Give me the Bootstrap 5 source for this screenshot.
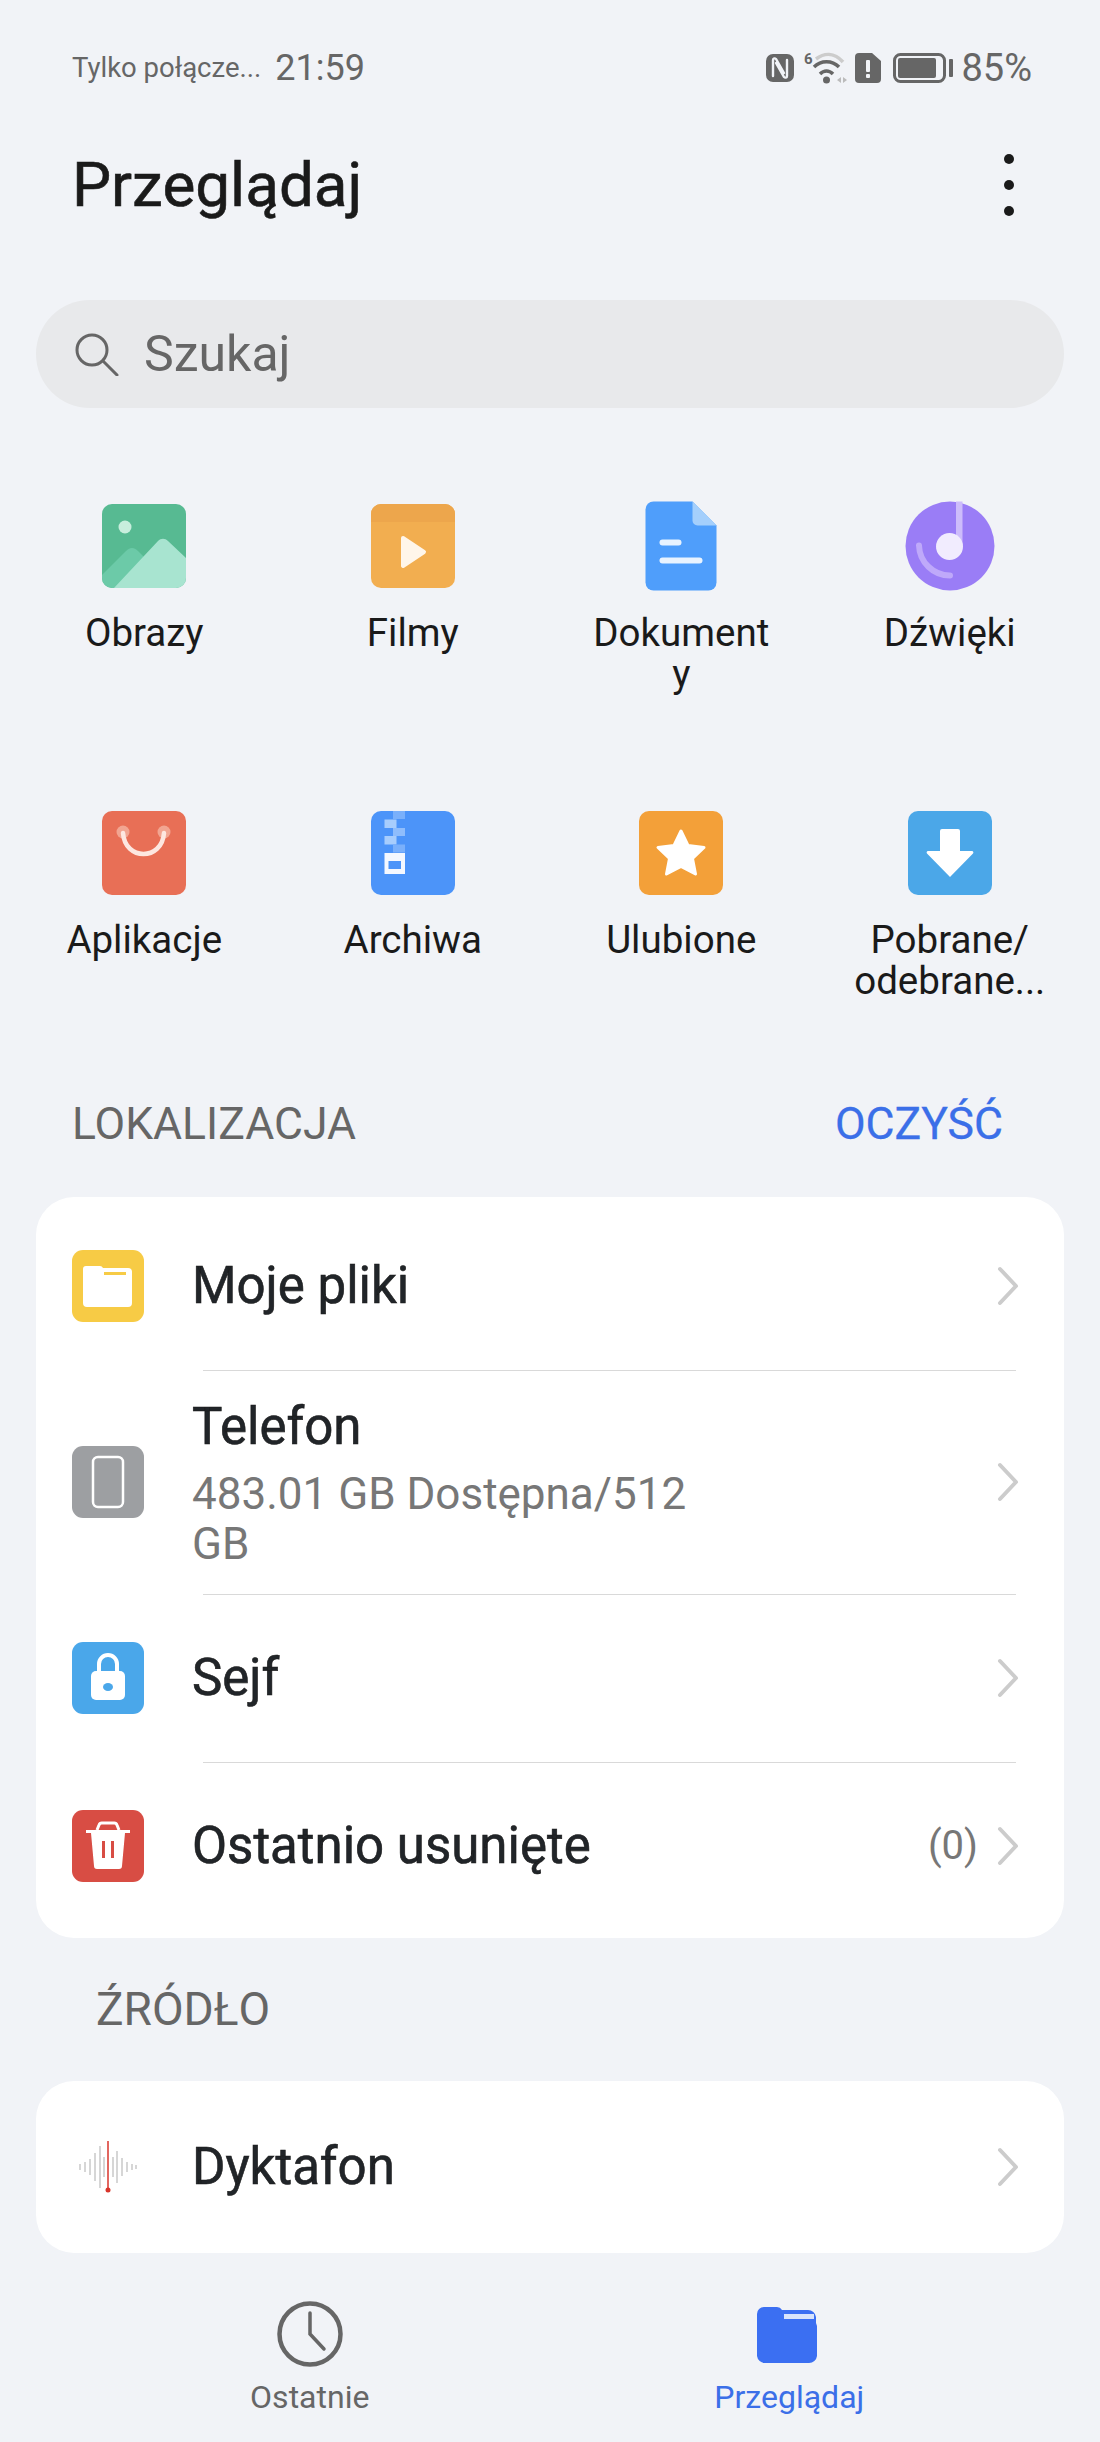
<!DOCTYPE html>
<html lang="pl">
<head>
    <meta charset="UTF-8">
    <meta name="viewport" content="width=device-width, initial-scale=1.0">
    <title>Przeglądaj</title>
    <link rel="stylesheet" href="https://cdn.jsdelivr.net/npm/bootstrap@5.3.3/dist/css/bootstrap.min.css">
    <style>
        body {
            width: 1100px;
            height: 2442px;
            overflow: hidden;
            background: #f1f3f7;
            font-family: Roboto, "Liberation Sans", sans-serif;
            color: #1a1a1a;
        }
        .status-bar { height: 136px; padding: 0 68px 0 72px; color: #666; }
        .status-note { font-size: 27.5px; margin-right: 14px; }
        .status-time { font-size: 36px; }
        .status-batt { font-size: 38px; margin-left: 7px; }
        .page-head { height: 98px; padding: 0 86px 0 72px; }
        .page-title { font-size: 62px; font-weight: 400; margin: 0; -webkit-text-stroke: 0.6px #1a1a1a; }
        .kebab-dot { width: 10px; height: 10px; border-radius: 50%; background: #1a1a1a; }
        .kebab { gap: 16px; }
        .search-box {
            height: 108px;
            margin: 66px 36px 0;
            padding-left: 38px;
            border-radius: 54px;
            background: #e8e9eb;
            color: #666;
            font-size: 50px;
            gap: 24px;
        }
        .cat-grid {
            display: grid;
            grid-template-columns: repeat(4, 268.5px);
            margin: 92px 0 0 10px;
        }
        .cat-cell { display: flex; flex-direction: column; align-items: center; }
        .cat-row-one { height: 307px; }
        .cat-label {
            width: 186px;
            margin-top: 20px;
            font-size: 38.5px;
            line-height: 41px;
            text-align: center;
            word-break: break-all;
        }
        .cat-wide { width: 250px; word-break: normal; }
        .sect-head { height: 60px; font-size: 44.5px; color: #666; }
        .sect-one { margin: 93px 0 43px; padding: 0 97px 0 72px; }
        .sect-two { margin: 41px 0 42px; padding-left: 96px; font-size: 46px; }
        .sect-action { color: #3b6fe8; -webkit-text-stroke: 0.3px #3b6fe8; }
        .file-card { margin: 0 36px; border: 0; border-radius: 38px; background: #fff; overflow: hidden; }
        .file-card-main { padding: 5px 0 8px; }
        .file-row {
            height: 168px;
            padding: 0 44px 0 36px;
            border: 0;
            background: transparent;
        }
        .file-row-tall { height: 224px; }
        .file-row-last { height: 172px; }
        .file-row + .file-row::before {
            content: "";
            position: absolute;
            top: 0;
            left: 167px;
            right: 48px;
            height: 1px;
            background: #d9d9d9;
        }
        .file-glyph { margin-right: 48px; flex-shrink: 0; }
        .file-name { font-size: 51px; font-weight: 400; line-height: 64px; -webkit-text-stroke: 0.6px #1a1a1a; }
        .file-sub { width: 510px; margin-top: 10px; font-size: 44px; line-height: 50px; color: #777; }
        .file-count { font-size: 40px; color: #777; margin-right: 18px; }
        .tab-bar { margin-top: 48px; padding: 0 71px 0 70px; }
        .tab-item { width: 479.5px; font-size: 32px; line-height: 40px; color: #666; }
        .tab-active { color: #3b6fe8; }
        .tab-item svg { display: block; margin-bottom: 10px; }
    </style>
</head>
<body>
    <div class="status-bar d-flex align-items-center justify-content-between">
        <div class="d-flex align-items-center">
            <span class="status-note">Tylko połącze...</span>
            <span class="status-time">21:59</span>
        </div>
        <div class="d-flex align-items-center">
            <svg width="188" height="34" viewBox="0 0 188 34">
                <rect x="0" y="3" width="28" height="28" rx="7" fill="#666"/>
                <path d="M7 25V9c0-2 2-2 3-1l8 14M21 9v16c0 2-2 2-3 1L10 12" fill="none" stroke="#f1f3f7" stroke-width="2.400" stroke-linecap="round"/>
                <text x="38" y="13" font-family="Roboto" font-weight="700" font-size="15" fill="#666">6</text>
                <path d="M50 8C58 2 68 1 77 11" fill="none" stroke="#ccc" stroke-width="3.500"/>
                <path d="M48 16c7-7 18-7 25 0" fill="none" stroke="#666" stroke-width="3.500"/>
                <path d="M54 23c4-4 9-4 13 0" fill="none" stroke="#666" stroke-width="3.500"/>
                <circle cx="60.500" cy="29" r="3.500" fill="#666"/>
                <path d="M75 26l-4 3 4 3zM77 26l4 3-4 3z" fill="#bbb"/>
                <path d="M93 2h13l9 8v18a4 4 0 0 1-4 4H93a4 4 0 0 1-4-4V6a4 4 0 0 1 4-4z" fill="#666"/>
                <rect x="100" y="9" width="4" height="12" rx="1" fill="#f1f3f7"/>
                <rect x="100" y="23" width="4" height="4" rx="1" fill="#f1f3f7"/>
                <rect x="128.500" y="3.500" width="50" height="27" rx="6" fill="none" stroke="#666" stroke-width="3"/>
                <rect x="132" y="7" width="38" height="20" rx="2" fill="#666"/>
                <rect x="183" y="8" width="4" height="18" rx="1" fill="#666"/>
            </svg>
            <span class="status-batt">85%</span>
        </div>
    </div>

    <div class="page-head d-flex align-items-center justify-content-between">
        <h1 class="page-title">Przeglądaj</h1>
        <div class="kebab d-flex flex-column">
            <div class="kebab-dot"></div>
            <div class="kebab-dot"></div>
            <div class="kebab-dot"></div>
        </div>
    </div>

    <div class="search-box d-flex align-items-center">
        <svg width="46" height="44" viewBox="0 0 46 44" fill="none" stroke="#666" stroke-width="3">
            <circle cx="18" cy="18" r="15"/>
            <path d="M29 29l14 14" stroke-linecap="round"/>
        </svg>
        <span>Szukaj</span>
    </div>

    <div class="cat-grid">
        <div class="cat-cell cat-row-one">
            <svg width="92" height="92" viewBox="-4 -4 92 92">
                <clipPath id="imgClip"><rect width="84" height="84" rx="10"/></clipPath>
                <g clip-path="url(#imgClip)">
                    <rect width="84" height="84" fill="#57ba92"/>
                    <circle cx="23" cy="23" r="6.500" fill="#c8eedd"/>
                    <path d="M0 71l24-24c4-4 8-4 12 0l16 16v21H0z" fill="#6ccaa8"/>
                    <path d="M12 84l44-47c3-3 7-3 10 0l18 17v30z" fill="#a8e4d0"/>
                </g>
            </svg>
            <div class="cat-label">Obrazy</div>
        </div>
        <div class="cat-cell cat-row-one">
            <svg width="92" height="92" viewBox="-4 -4 92 92">
                <clipPath id="filmClip"><rect width="84" height="84" rx="10"/></clipPath>
                <g clip-path="url(#filmClip)">
                    <rect width="84" height="84" fill="#f2ae50"/>
                    <rect width="84" height="18" fill="#eda64c"/>
                </g>
                <path d="M32 34l21 14-21 14z" fill="#fff6ea" stroke="#fff6ea" stroke-width="4" stroke-linejoin="round"/>
            </svg>
            <div class="cat-label">Filmy</div>
        </div>
        <div class="cat-cell cat-row-one">
            <svg width="92" height="92" viewBox="-10.500 -1.500 92 92">
                <path d="M8 0h39l24 24v57a8 8 0 0 1-8 8H8a8 8 0 0 1-8-8V8a8 8 0 0 1 8-8z" fill="#4f9efb"/>
                <path d="M47 0l24 24H52a5 5 0 0 1-5-5z" fill="#a4cffc"/>
                <rect x="14" y="38" width="22" height="6" rx="3" fill="#e8f3ff"/>
                <rect x="14" y="56" width="43" height="6" rx="3" fill="#e8f3ff"/>
            </svg>
            <div class="cat-label">Dokumenty</div>
        </div>
        <div class="cat-cell cat-row-one">
            <svg width="92" height="92" viewBox="-1.500 -1.500 92 92">
                <circle cx="44.500" cy="44.500" r="44.500" fill="#9a7df6"/>
                <rect x="50.500" y="0" width="6.500" height="45" fill="#cdbcfb"/>
                <circle cx="44" cy="45" r="13.500" fill="#f1ecfe"/>
                <path d="M13.500 44a31 31 0 0 0 31 30" fill="none" stroke="#bfa9fa" stroke-width="6" stroke-linecap="round"/>
            </svg>
            <div class="cat-label">Dźwięki</div>
        </div>

        <div class="cat-cell">
            <svg width="92" height="92" viewBox="-4 -4 92 92">
                <rect width="84" height="84" rx="10" fill="#e86f56"/>
                <circle cx="21" cy="21" r="6.500" fill="#f2a591"/>
                <circle cx="62" cy="21" r="6.500" fill="#f2a591"/>
                <path d="M21 22c2 28 39 28 41 0" fill="none" stroke="#fde7e0" stroke-width="4.500" stroke-linecap="round"/>
            </svg>
            <div class="cat-label">Aplikacje</div>
        </div>
        <div class="cat-cell">
            <svg width="92" height="92" viewBox="-4 -4 92 92">
                <clipPath id="zipClip"><rect width="84" height="84" rx="10"/></clipPath>
                <g clip-path="url(#zipClip)">
                    <rect width="84" height="84" fill="#4c94f9"/>
                    <rect x="22" y="0" width="12" height="8" fill="#7ab0fb"/>
                    <rect x="13.500" y="8.500" width="12" height="8.500" fill="#a7cdfd"/>
                    <rect x="22" y="17" width="12" height="8" fill="#8fbdfc"/>
                    <rect x="13.500" y="25" width="12" height="8.500" fill="#a7cdfd"/>
                    <rect x="22" y="33.500" width="12" height="8" fill="#7ab0fb"/>
                    <rect x="13.500" y="42" width="20.500" height="21" fill="#f4f8ff"/>
                    <rect x="17.500" y="50" width="12.500" height="8" fill="#4c94f9"/>
                </g>
            </svg>
            <div class="cat-label">Archiwa</div>
        </div>
        <div class="cat-cell">
            <svg width="92" height="92" viewBox="-4 -4 92 92">
                <rect width="84" height="84" rx="10" fill="#f3a039"/>
                <path d="M42 20l7 14.500 16 2-11.500 11 3 15.500L42 55.500 27.500 63l3-15.500L19 36.500l16-2z" fill="#fff" stroke="#fff" stroke-width="3" stroke-linejoin="round"/>
            </svg>
            <div class="cat-label">Ulubione</div>
        </div>
        <div class="cat-cell">
            <svg width="92" height="92" viewBox="-4 -4 92 92">
                <rect width="84" height="84" rx="10" fill="#4ba7e8"/>
                <path d="M34 18h16a2 2 0 0 1 2 2v20h12a1.500 1.500 0 0 1 1 2.500L42 66 19 42.500a1.500 1.500 0 0 1 1-2.500h12V20a2 2 0 0 1 2-2z" fill="#fff"/>
            </svg>
            <div class="cat-label cat-wide">Pobrane/ odebrane...</div>
        </div>
    </div>

    <div class="sect-head sect-one d-flex align-items-center justify-content-between">
        <span>LOKALIZACJA</span>
        <span class="sect-action">OCZYŚĆ</span>
    </div>

    <div class="card file-card file-card-main">
        <div class="list-group list-group-flush">
            <div class="list-group-item file-row d-flex align-items-center">
                <svg width="72" height="72" viewBox="0 0 72 72" class="file-glyph">
                    <rect width="72" height="72" rx="11" fill="#f7cb45"/>
                    <path d="M14 16h14a4 4 0 0 1 3 2h25a4 4 0 0 1 4 4v31a4 4 0 0 1-4 4H15a4 4 0 0 1-4-4V19a3 3 0 0 1 3-3z" fill="#fff"/>
                    <rect x="32" y="22" width="22" height="3" fill="#f7cb45"/>
                </svg>
                <div class="file-name flex-grow-1">Moje pliki</div>
                <svg width="24" height="40" viewBox="0 0 24 40" fill="none" stroke="#ccc" stroke-width="4" stroke-linecap="round" stroke-linejoin="round"><path d="M4 3l16 17L4 37"/></svg>
            </div>
            <div class="list-group-item file-row file-row-tall d-flex align-items-center">
                <svg width="72" height="72" viewBox="0 0 72 72" class="file-glyph">
                    <rect width="72" height="72" rx="11" fill="#9d9fa2"/>
                    <rect x="21" y="11" width="30" height="50" rx="5" fill="none" stroke="#fff" stroke-width="2.500"/>
                </svg>
                <div class="flex-grow-1">
                    <div class="file-name">Telefon</div>
                    <div class="file-sub">483.01 GB Dostępna/512 GB</div>
                </div>
                <svg width="24" height="40" viewBox="0 0 24 40" fill="none" stroke="#ccc" stroke-width="4" stroke-linecap="round" stroke-linejoin="round"><path d="M4 3l16 17L4 37"/></svg>
            </div>
            <div class="list-group-item file-row d-flex align-items-center">
                <svg width="72" height="72" viewBox="0 0 72 72" class="file-glyph">
                    <rect width="72" height="72" rx="11" fill="#4aa7ea"/>
                    <path d="M27 30V22a9 9 0 0 1 18 0v8" fill="none" stroke="#fff" stroke-width="4"/>
                    <rect x="19" y="29" width="34" height="29" rx="5" fill="#fff"/>
                    <ellipse cx="36" cy="45" rx="5" ry="4" fill="#4aa7ea"/>
                </svg>
                <div class="file-name flex-grow-1">Sejf</div>
                <svg width="24" height="40" viewBox="0 0 24 40" fill="none" stroke="#ccc" stroke-width="4" stroke-linecap="round" stroke-linejoin="round"><path d="M4 3l16 17L4 37"/></svg>
            </div>
            <div class="list-group-item file-row d-flex align-items-center">
                <svg width="72" height="72" viewBox="0 0 72 72" class="file-glyph">
                    <rect width="72" height="72" rx="11" fill="#d84d44"/>
                    <path d="M25 20l2-5a3 3 0 0 1 3-2h12a3 3 0 0 1 3 2l2 5" fill="none" stroke="#fff" stroke-width="3"/>
                    <rect x="14" y="20" width="44" height="3" fill="#fff"/>
                    <path d="M19 23h34l-3 33a3 3 0 0 1-3 3H25a3 3 0 0 1-3-3z" fill="#fff"/>
                    <rect x="30" y="31" width="3" height="17" fill="#d84d44"/>
                    <rect x="39" y="31" width="3" height="17" fill="#d84d44"/>
                </svg>
                <div class="file-name flex-grow-1">Ostatnio usunięte</div>
                <span class="file-count">(0)</span>
                <svg width="24" height="40" viewBox="0 0 24 40" fill="none" stroke="#ccc" stroke-width="4" stroke-linecap="round" stroke-linejoin="round"><path d="M4 3l16 17L4 37"/></svg>
            </div>
        </div>
    </div>

    <div class="sect-head sect-two d-flex align-items-center">ŹRÓDŁO</div>

    <div class="card file-card">
        <div class="list-group list-group-flush">
            <div class="list-group-item file-row file-row-last d-flex align-items-center">
                <svg width="72" height="72" viewBox="0 0 72 72" class="file-glyph" stroke="#d6d6d6" stroke-width="2" fill="none">
                    <path d="M8 33v6M13 31v10M18 28v16M23 22v28M28 15v42M32 26v20M41 26v20M45 20v32M50 27v18M55 31v10M60 33v6M64 34v4"/>
                    <path d="M36 10v48" stroke="#d8352b" stroke-width="1.500"/>
                    <circle cx="36" cy="59" r="2.500" fill="#d8352b" stroke="none"/>
                </svg>
                <div class="file-name flex-grow-1">Dyktafon</div>
                <svg width="24" height="40" viewBox="0 0 24 40" fill="none" stroke="#ccc" stroke-width="4" stroke-linecap="round" stroke-linejoin="round"><path d="M4 3l16 17L4 37"/></svg>
            </div>
        </div>
    </div>

    <div class="tab-bar d-flex">
        <div class="tab-item d-flex flex-column align-items-center">
            <svg width="66" height="66" viewBox="0 0 66 66" fill="none" stroke="#666" stroke-width="4.500">
                <circle cx="33" cy="33" r="30.500"/>
                <path d="M33 12v21l14 15" stroke-width="3.500" stroke-linecap="round"/>
            </svg>
            <span>Ostatnie</span>
        </div>
        <div class="tab-item tab-active d-flex flex-column align-items-center">
            <svg width="66" height="66" viewBox="0 0 66 66">
                <path d="M8 6h13a6 6 0 0 1 5 3h26a8 8 0 0 1 8 7v6l1 3v30a8 8 0 0 1-8 7H9a8 8 0 0 1-8-7V13a7 7 0 0 1 7-7z" fill="#3b6ff2"/>
                <rect x="28" y="13" width="30" height="5" fill="#d8e3fb"/>
            </svg>
            <span>Przeglądaj</span>
        </div>
    </div>

    <script src="https://cdn.jsdelivr.net/npm/bootstrap@5.3.3/dist/js/bootstrap.bundle.min.js"></script>
</body>
</html>
